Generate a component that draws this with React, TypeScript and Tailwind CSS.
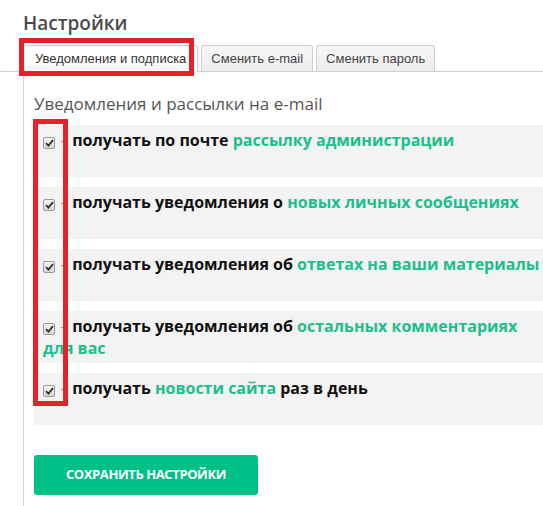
import React from "react";

type Part = { t: string; link?: boolean };

const options: Part[][] = [
  [{ t: "получать по почте " }, { t: "рассылку администрации", link: true }],
  [{ t: "получать уведомления о " }, { t: "новых личных сообщениях", link: true }],
  [{ t: "получать уведомления об " }, { t: "ответах на ваши материалы", link: true }],
  [{ t: "получать уведомления об " }, { t: "остальных комментариях для вас", link: true }],
  [{ t: "получать " }, { t: "новости сайта", link: true }, { t: " раз в день" }],
];

function Check() {
  return (
    <span className="inline-flex items-center justify-center w-[12px] h-[12px] mr-[5px] align-[-1px] rounded-[2px] border border-[#9a9a9a] bg-gradient-to-b from-[#f4f4f4] to-[#d8d8d8]">
      <svg width="9" height="8" viewBox="0 0 9 8">
        <path d="M1 4.2 L3.4 6.6 L8 1.2" fill="none" stroke="#333" strokeWidth="1.8" />
      </svg>
    </span>
  );
}

export default function App() {
  return (
    <div className="relative w-[543px] h-[506px] overflow-hidden bg-white font-['Open_Sans',sans-serif]">
      <h1 className="pl-[23px] pt-[9px] text-[19px] leading-[28px] font-semibold text-[#4a4a4a]">Настройки</h1>

      <div className="mt-[8px] flex items-end gap-[3px] pl-[23px] border-b border-[#cfcfcf] font-['Liberation_Sans',Arial,sans-serif] text-[13px] text-[#333]">
        <div className="h-[27px] -mb-px px-[11px] flex items-center bg-white border border-b-0 border-[#cfcfcf] rounded-t-[3px]">
          Уведомления и подписка
        </div>
        <div className="h-[26px] px-[9px] flex items-center bg-gradient-to-b from-[#f7f7f7] to-[#ececec] border border-b-0 border-[#cfcfcf] rounded-t-[3px] text-[#444]">
          Сменить e-mail
        </div>
        <div className="h-[26px] px-[9px] flex items-center bg-gradient-to-b from-[#f7f7f7] to-[#ececec] border border-b-0 border-[#cfcfcf] rounded-t-[3px] text-[#444]">
          Сменить пароль
        </div>
      </div>

      <div className="ml-[23px] border-l border-[#d6d6d6] pl-[10px] h-[440px]">
        <h2 className="pt-[20px] text-[17px] leading-[24px] text-[#555]">Уведомления и рассылки на e-mail</h2>

        <div className="mt-[9px] flex flex-col gap-[10px]">
          {options.map((parts, i) => (
            <div key={i} className="h-[52px] bg-[#f3f3f3] pl-[9px] pr-[2px] pt-[4px] text-[16px] leading-[22px] font-bold text-[#111]">
              <Check />
              <span className="text-[#9a9a9a] font-normal mr-[7px]">-</span>
              {parts.map((p, j) => (
                <span key={j} className={p.link ? "text-[#1bbf8c]" : ""}>
                  {p.t}
                </span>
              ))}
            </div>
          ))}
        </div>

        <button className="mt-[30px] w-[224px] h-[40px] rounded-[3px] bg-[#00c087] text-white text-[13px] font-bold tracking-[-0.4px] uppercase">
          Сохранить настройки
        </button>
      </div>

      {/* red highlight marks */}
      <div className="absolute left-[19px] top-[38px] w-[175px] h-[38px] border-[5px] border-[#e8202a]" />
      <div className="absolute left-[33px] top-[119px] w-[35px] h-[287px] border-[5px] border-[#e8202a]" />
    </div>
  );
}
